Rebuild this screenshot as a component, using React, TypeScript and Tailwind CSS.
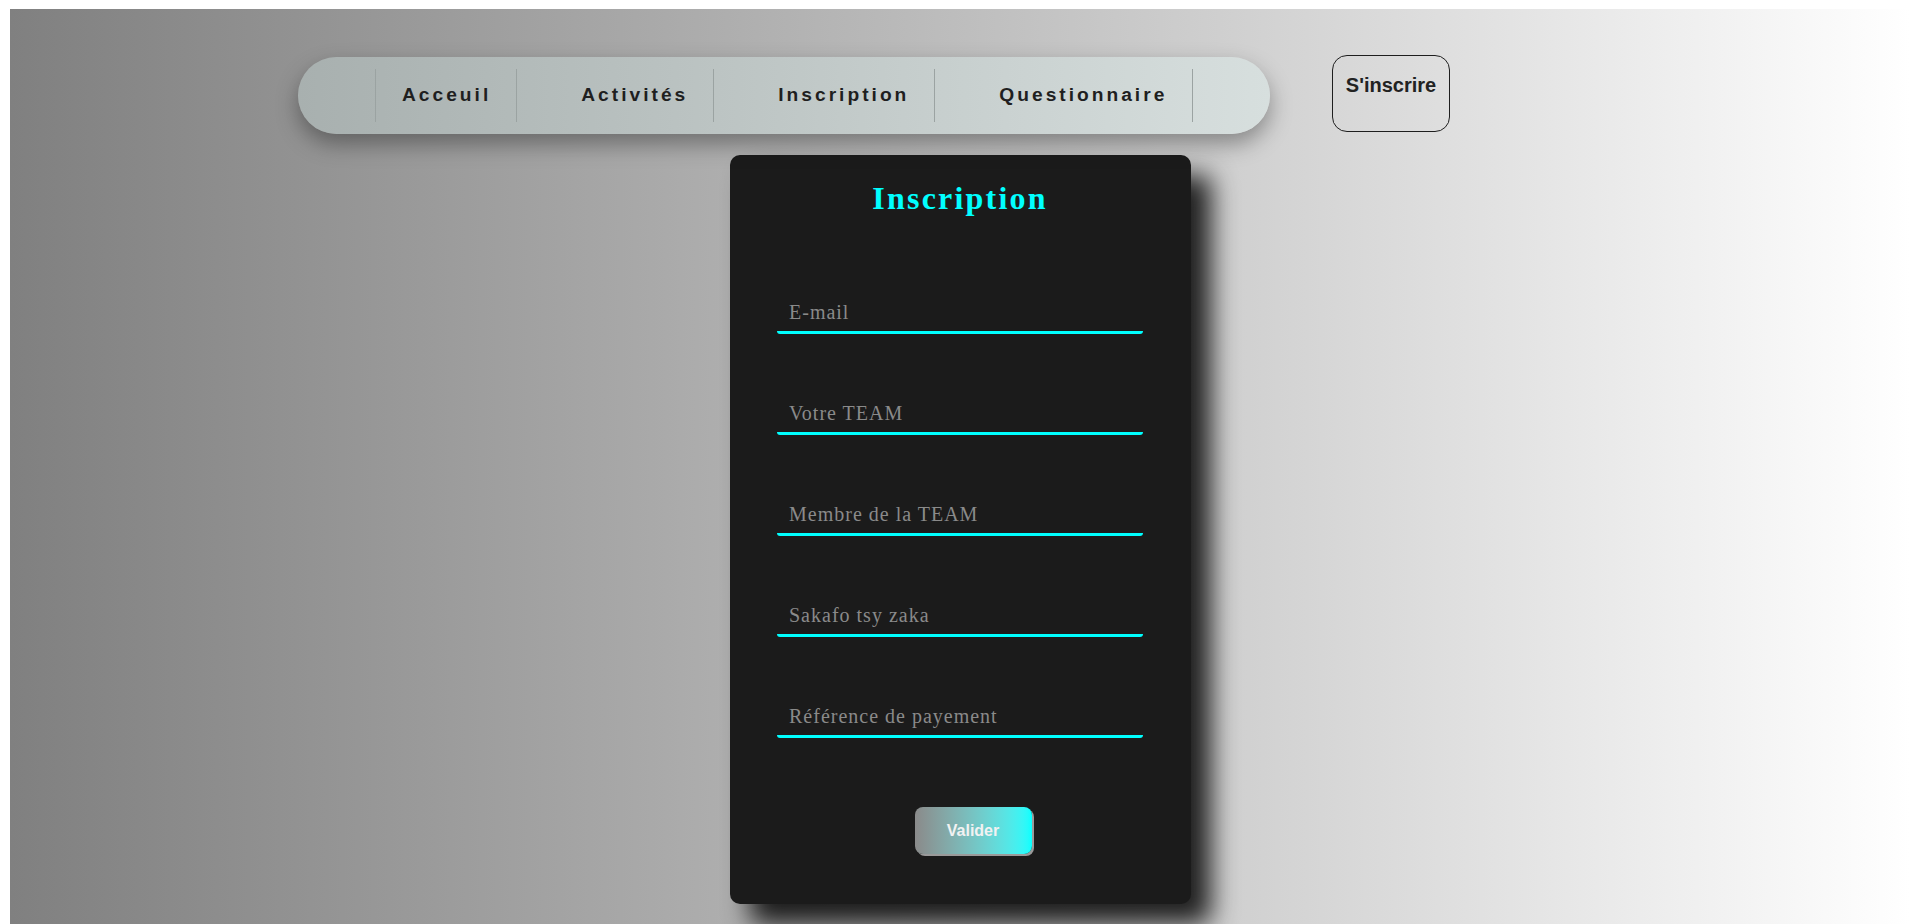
import { useState } from 'react'

const navLinks = ['Acceuil', 'Activités', 'Inscription', 'Questionnaire']

const fields = [
  { name: 'email', placeholder: 'E-mail', type: 'email' },
  { name: 'team', placeholder: 'Votre TEAM', type: 'text' },
  { name: 'membres', placeholder: 'Membre de la TEAM', type: 'text' },
  { name: 'sakafo', placeholder: 'Sakafo tsy zaka', type: 'text' },
  { name: 'reference', placeholder: 'Référence de payement', type: 'text' }
]

const Navbar = () => {
  return (
    <div className="flex items-start pl-[288px]">
      <nav className="mt-[2px] flex h-[77px] w-[972px] items-center rounded-full bg-linear-to-r from-[#a8b0af] to-[#d7dfde] pl-[77px] shadow-[0_10px_22px_rgba(0,0,0,0.35)]">
        <ul className="flex h-[53px] items-stretch border-l border-[#9ba3a2]">
          {navLinks.map((link, i) => (
            <li
              key={link}
              className={`flex items-center border-r border-[#9ba3a2] pr-[25px] ${i === 0 ? 'pl-[26px]' : 'pl-[64px]'}`}
            >
              <a
                href="#"
                className="font-['Liberation_Sans',Arial,sans-serif] text-[19.2px] font-bold tracking-[3px] text-[#1f1f1f]"
              >
                {link}
              </a>
            </li>
          ))}
        </ul>
      </nav>
      <a
        href="#"
        className="ml-[62px] box-border block h-[77px] w-[118px] rounded-[15px] border border-[#1e1e1e] pt-[18px] text-center font-['Liberation_Sans',Arial,sans-serif] text-[20px] leading-[23px] font-bold text-[#222]"
      >
        S'inscrire
      </a>
    </div>
  )
}

const InscriptionForm = () => {
  const [values, setValues] = useState<Record<string, string>>({})

  return (
    <form
      onSubmit={(e) => e.preventDefault()}
      className="mx-auto mt-[21px] flex w-[461px] flex-col rounded-[10px] bg-[#1b1b1b] pt-[27px] pb-[50px] shadow-[20px_20px_26px_rgba(0,0,0,0.85)]"
    >
      <h1 className="text-center font-['Liberation_Serif','Times_New_Roman',serif] text-[32px] leading-[32px] font-bold tracking-[2.2px] text-[#00ffff]">
        Inscription
      </h1>

      <div className="mt-[80px] flex flex-col gap-[61px]">
        {fields.map((field) => (
          <input
            key={field.name}
            type={field.type}
            name={field.name}
            placeholder={field.placeholder}
            value={values[field.name] ?? ''}
            onChange={(e) => setValues({ ...values, [field.name]: e.target.value })}
            className="mx-auto box-border h-[40px] w-[366px] rounded-[3px] border-0 border-b-[3px] border-b-[#00ffff] bg-transparent pl-[12px] font-['Liberation_Serif','Times_New_Roman',serif] text-[20px] tracking-[1px] text-[#ddd] outline-none placeholder:text-[#8a8a8a]"
          />
        ))}
      </div>

      <div className="mt-[69px] pl-[185px]">
        <button
          type="submit"
          className="h-[47px] w-[117px] rounded-[8px] bg-linear-to-r from-[#8a8a8a] to-[#00ffff] font-['Liberation_Sans',Arial,sans-serif] text-[16px] font-bold text-[#f2f2f2] shadow-[2px_2px_0_#9a9a9a]"
        >
          Valider
        </button>
      </div>
    </form>
  )
}

export default function App() {
  return (
    <div className="h-[924px] overflow-hidden bg-white pt-[9px] pl-[10px] pr-[10px]">
      <div className="h-[915px] overflow-hidden bg-linear-to-r from-[#808080] to-white pt-[46px]">
        <Navbar />
        <InscriptionForm />
      </div>
    </div>
  )
}
